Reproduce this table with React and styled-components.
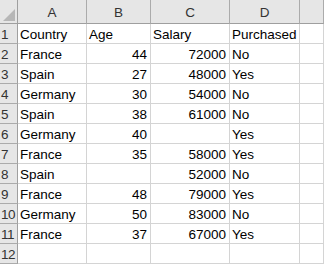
import React from 'react';
import styled, { createGlobalStyle } from 'styled-components';

const GlobalStyle = createGlobalStyle`
    html, body {
        margin: 0;
        padding: 0;
        background: #ffffff;
        overflow: hidden;
    }
`;

const Sheet = styled.div`
    display: grid;
    grid-template-columns: 18px 69px 64px 79px 70px 1fr;
    grid-auto-rows: 20px;
    grid-template-rows: 24px;
    width: 324px;
    height: 264px;
    font-family: "Liberation Sans", Arial, sans-serif;
    font-size: 13.5px;
    color: #000;
    overflow: hidden;
`;

const Cell = styled.div`
    box-sizing: border-box;
    border-right: 1px solid #d4d4d4;
    border-bottom: 1px solid #d4d4d4;
    display: flex;
    align-items: flex-end;
    justify-content: ${p => (p.$num ? 'flex-end' : 'flex-start')};
    padding: 0 3px 1px 2px;
    white-space: nowrap;
    overflow: hidden;
`;

const ColHead = styled.div`
    box-sizing: border-box;
    background: #e6e6e6;
    border-right: 1px solid #ababab;
    border-bottom: 1px solid #9f9f9f;
    display: flex;
    align-items: center;
    justify-content: center;
    padding-top: 2px;
    color: #333;
`;

const Corner = styled(ColHead)`
    position: relative;
    border-right-color: #9f9f9f;
`;

const Triangle = styled.div`
    position: absolute;
    right: 2px;
    bottom: 2px;
    width: 0;
    height: 0;
    border-left: 12px solid transparent;
    border-bottom: 12px solid #b7b7b7;
`;

const RowHead = styled.div`
    box-sizing: border-box;
    background: #e6e6e6;
    border-right: 1px solid #9f9f9f;
    border-bottom: 1px solid #ababab;
    display: flex;
    align-items: flex-end;
    padding: 0 0 1px 1px;
    color: #333;
    letter-spacing: -0.5px;
`;

const rows = [
    ['Country', 'Age', 'Salary', 'Purchased'],
    ['France', 44, 72000, 'No'],
    ['Spain', 27, 48000, 'Yes'],
    ['Germany', 30, 54000, 'No'],
    ['Spain', 38, 61000, 'No'],
    ['Germany', 40, '', 'Yes'],
    ['France', 35, 58000, 'Yes'],
    ['Spain', '', 52000, 'No'],
    ['France', 48, 79000, 'Yes'],
    ['Germany', 50, 83000, 'No'],
    ['France', 37, 67000, 'Yes'],
    ['', '', '', ''],
];

export default function App() {
    return (
        <>
            <GlobalStyle />
            <Sheet>
                <Corner><Triangle /></Corner>
                {['A', 'B', 'C', 'D', ''].map((c, i) => (
                    <ColHead key={i}>{c}</ColHead>
                ))}
                {rows.map((r, i) => (
                    <React.Fragment key={i}>
                        <RowHead>{i + 1}</RowHead>
                        {r.map((v, j) => (
                            <Cell key={j} $num={typeof v === 'number'}>{v}</Cell>
                        ))}
                        <Cell />
                    </React.Fragment>
                ))}
            </Sheet>
        </>
    );
}
